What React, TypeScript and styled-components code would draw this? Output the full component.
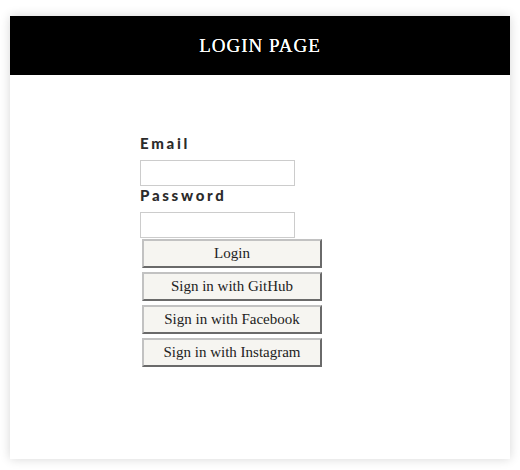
import React from 'react';
import styled, { createGlobalStyle } from 'styled-components';

const GlobalStyle = createGlobalStyle`
  html, body {
    margin: 0;
    padding: 0;
    background: #ffffff;
  }
  * {
    box-sizing: border-box;
  }
`;

const Page = styled.div`
  padding: 16px 10px 11px;
`;

const Card = styled.div`
  width: 500px;
  height: 443px;
  background: #ffffff;
  box-shadow: 0 0 10px rgba(0, 0, 0, 0.16);
  display: flex;
  flex-direction: column;
`;

const Header = styled.header`
  height: 59px;
  background: #000000;
  display: flex;
  align-items: center;
  justify-content: center;
`;

const Title = styled.h1`
  margin: 0;
  color: #ffffff;
  font-family: 'Liberation Serif', serif;
  font-weight: 400;
  font-size: 19px;
  letter-spacing: 1px;
  text-shadow: 0 0 0.4px #ffffff;
`;

const Form = styled.form`
  display: flex;
  flex-direction: column;
  align-items: flex-start;
  padding: 58px 0 0 130px;
`;

const Label = styled.label`
  display: block;
  height: 20px;
  line-height: 20px;
  margin-bottom: 7px;
  font-family: Lato, sans-serif;
  font-weight: 900;
  font-size: 15px;
  letter-spacing: 2.7px;
  color: #2b2b2b;
`;

const Input = styled.input`
  width: 155px;
  height: 26px;
  margin: 0 0 -1px;
  padding: 2px 4px;
  border: 1px solid #cccccc;
  background: #ffffff;
  outline: none;
`;

const ButtonList = styled.div`
  display: flex;
  flex-direction: column;
  gap: 4px;
  margin: 2px 0 0 2px;
`;

const Button = styled.button`
  width: 180px;
  height: 29px;
  padding: 0;
  border-style: solid;
  border-width: 2px;
  border-color: #c2c2c2 #6a6a6a #6a6a6a #c2c2c2;
  background: #f6f5f1;
  color: #222222;
  font-family: 'Liberation Serif', serif;
  font-size: 15px;
  cursor: pointer;
`;

const buttons = [
  'Login',
  'Sign in with GitHub',
  'Sign in with Facebook',
  'Sign in with Instagram',
];

const App: React.FC = () => {
  return (
    <Page>
      <GlobalStyle />
      <Card>
        <Header>
          <Title>LOGIN PAGE</Title>
        </Header>
        <Form onSubmit={(e) => e.preventDefault()}>
          <Label htmlFor="email">Email</Label>
          <Input id="email" type="email" />
          <Label htmlFor="password">Password</Label>
          <Input id="password" type="password" />
          <ButtonList>
            {buttons.map((text) => (
              <Button key={text} type="button">
                {text}
              </Button>
            ))}
          </ButtonList>
        </Form>
      </Card>
    </Page>
  );
};

export default App;
